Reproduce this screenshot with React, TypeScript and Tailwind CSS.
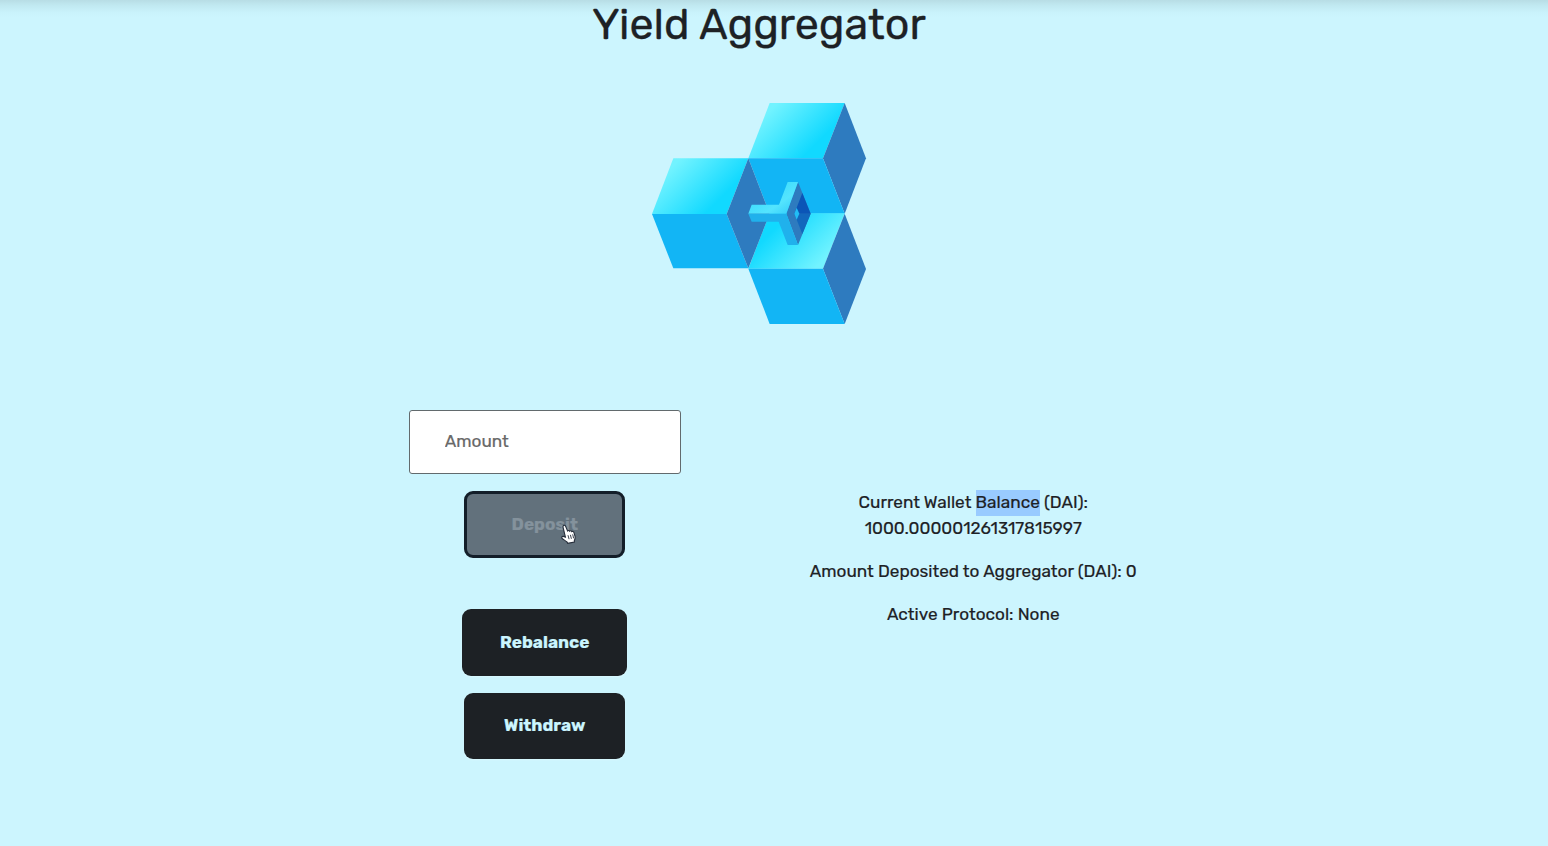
import { useState } from "react";

function Logo() {
  return (
    <svg width="238" height="245" viewBox="0 0 714 735" aria-label="Yield Aggregator logo">
      <defs>
        <linearGradient id="topFace" gradientUnits="userSpaceOnUse" x1="372" y1="78" x2="492" y2="198">
          <stop offset="0" stopColor="#72f3ff" />
          <stop offset="1" stopColor="#11d9ff" />
        </linearGradient>
        <linearGradient id="leftFace" gradientUnits="userSpaceOnUse" x1="83" y1="244" x2="203" y2="364">
          <stop offset="0" stopColor="#72f3ff" />
          <stop offset="1" stopColor="#11d9ff" />
        </linearGradient>
        <linearGradient id="lowerFace" gradientUnits="userSpaceOnUse" x1="425" y1="395" x2="545" y2="515">
          <stop offset="0" stopColor="#11d9ff" />
          <stop offset="1" stopColor="#72f3ff" />
        </linearGradient>
        <linearGradient id="armFace" gradientUnits="userSpaceOnUse" x1="400" y1="300" x2="450" y2="372">
          <stop offset="0" stopColor="#42defd" />
          <stop offset="0.5" stopColor="#54e4fe" />
          <stop offset="1" stopColor="#35cffa" />
        </linearGradient>
      </defs>
      <polygon points="389,39 614,39 549,205 325,205" fill="url(#topFace)" />
      <polygon points="614,39 678,205 614,371 549,205" fill="#2e7bbf" />
      <polygon points="325,205 549,205 614,371 389,371" fill="#12b5f5" />
      <polygon points="100,205 325,205 260,372 36,372" fill="url(#leftFace)" />
      <polygon points="36,372 260,372 325,535 100,535" fill="#12b5f5" />
      <polygon points="389,370 614,370 549,536 325,536" fill="url(#lowerFace)" />
      <polygon points="325,205 389,371 325,535 260,372" fill="#2e7bbf" />
      <polygon points="614,371 678,537 614,702 549,536" fill="#2e7bbf" />
      <polygon points="325,536 549,536 614,702 389,702" fill="#12b5f5" />
      <polygon points="474,276 512,371 474,465 439,371" fill="#2e7bbf" />
      <polygon points="487,309 512,371 463,371" fill="#0b55b7" />
      <polygon points="463,371 512,371 487,432" fill="#1267bd" />
      <polygon points="470,353 478,371 470,389 463,371" fill="#22bdf5" />
      <polygon points="443,276 474,276 439,371 325,371 335,344 417,344" fill="url(#armFace)" />
      <polygon points="325,371 439,371 474,465 443,465 416,395 335,395" fill="#20b1ec" />
    </svg>
  );
}

function HandCursor() {
  return (
    <svg className="pointer-events-none absolute left-[94px] top-[30px]" width="17" height="20" viewBox="0 0 17 20">
      <path
        d="M2.2 2.1C2.6 1 4 .9 4.5 2l2.1 5c.6-.7 1.7-.6 2.1.2.7-.7 1.8-.4 2.1.4.8-.6 1.9-.1 2.1.8l1.2 4.1c.3 1.8-.2 3-.8 4.3l.1 1.3-6.7 1.2-.7-1.4c-1.6-.8-3.1-2.2-4.6-3.2-1.3-.9-.5-2.6 1-2.3l2 .7L2.1 3.5c-.2-.5-.1-1 .1-1.4z"
        fill="#fff"
        stroke="#252d3a"
        strokeWidth="1.1"
      />
      <path d="M7 11.2l1.1 4M9.4 10.8l1 4M11.7 10.3l.9 4" stroke="#252d3a" strokeWidth="0.9" />
    </svg>
  );
}

export default function App() {
  const [amount, setAmount] = useState("");

  return (
    <div className="h-[846px] overflow-hidden bg-[#ccf5fe] bg-[linear-gradient(#b8dde5_0px,#c0e8f0_5px,#c9f2fb_12px,#ccf5fe_18px)] pr-[30px] font-[Rubik,Roboto,sans-serif] text-[#1d2125]">
      <header className="flex flex-col items-center">
        <h1 className="h-[90px] whitespace-nowrap text-[43px] leading-[50px] [-webkit-text-stroke:0.3px]">Yield Aggregator</h1>
        <Logo />
      </header>
      <main className="mx-auto mt-[75px] grid w-[857px] grid-cols-2 text-[17.2px] [-webkit-text-stroke:0.2px]">
        <section className="flex flex-col items-center">
          <input
            value={amount}
            onChange={(e) => setAmount(e.target.value)}
            placeholder="Amount"
            className="h-[64px] w-[272px] rounded-[3px] border border-[#626a6d] bg-white px-[35px] pb-[2px] placeholder:text-[#686868]"
          />
          <button className="relative mt-[17px] h-[67px] w-[161px] rounded-[9px] border-[3px] border-[#131e29] bg-[#62717c] font-bold text-[#84929c]">
            Deposit
            <HandCursor />
          </button>
          <button className="mt-[51px] h-[67px] w-[165px] rounded-[9px] bg-[#1d2125] font-bold text-[#cbf5fe] shadow-[0_1px_2px_#daf8ff]">
            Rebalance
          </button>
          <button className="mt-[17px] h-[66px] w-[161px] rounded-[9px] bg-[#1d2125] font-bold text-[#cbf5fe] shadow-[0_1px_2px_#daf8ff]">
            Withdraw
          </button>
        </section>
        <section className="flex flex-col items-center gap-[17.3px] whitespace-nowrap pt-[80.4px] text-center leading-[25.7px]">
          <p>
            Current Wallet <span className="inline-block bg-[#99cbff]">Balance</span> (DAI):
            <br />
            1000.000001261317815997
          </p>
          <p>Amount Deposited to Aggregator (DAI): 0</p>
          <p>Active Protocol: None</p>
        </section>
      </main>
    </div>
  );
}
